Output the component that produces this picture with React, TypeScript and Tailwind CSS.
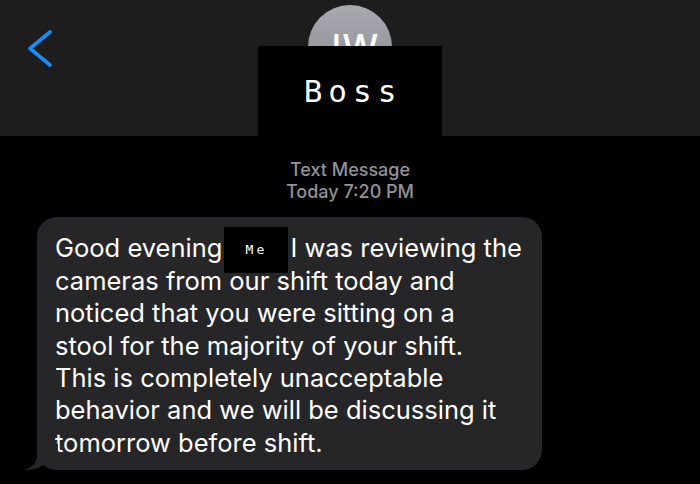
const lines = [
  null,
  "cameras from our shift today and",
  "noticed that you were sitting on a",
  "stool for the majority of your shift.",
  "This is completely unacceptable",
  "behavior and we will be discussing it",
  "tomorrow before shift.",
];

function Redacted({ label }: { label: string }) {
  return (
    <span className="inline-flex items-center justify-center w-[64px] h-[46px] -my-[8px] mx-[2px] align-middle bg-black text-[13px] text-white font-['DejaVu_Sans_Mono',monospace] tracking-[3px]">
      {label}
    </span>
  );
}

export default function App() {
  return (
    <div className="w-[700px] h-[484px] overflow-hidden bg-black font-['Inter',sans-serif]">
      {/* nav bar */}
      <header className="relative h-[136px] bg-[#1d1d1e] flex justify-center">
        <button className="absolute left-[26px] top-[30px]">
          <svg width="26" height="37" viewBox="0 0 26 37" fill="none">
            <path
              d="M24 2 L4 18.5 L24 35"
              stroke="#1b8bf8"
              strokeWidth="3.6"
              strokeLinecap="round"
              strokeLinejoin="round"
            />
          </svg>
        </button>

        <div className="mt-[5px] w-[84px] h-[84px] rounded-full bg-gradient-to-b from-[#a7a8b0] to-[#8a8b93] flex items-center justify-center">
          <span className="text-[36px] font-medium text-white tracking-[1px]">
            JW
          </span>
        </div>

        {/* name label */}
        <div className="absolute left-[258px] top-[46px] w-[184px] h-[90px] bg-black flex items-center justify-center">
          <span className="text-[31px] text-white font-['DejaVu_Sans_Mono',monospace] tracking-[6px] pl-[6px]">
            Boss
          </span>
        </div>
      </header>

      <div className="mt-[23px] text-center text-[18px] leading-[21.5px] font-medium text-[#929297]">
        <div>Text Message</div>
        <div>Today 7:20 PM</div>
      </div>

      {/* incoming bubble */}
      <div className="relative mt-[15px] ml-[37px] w-[505px] rounded-[20px] bg-[#262628] pl-[18px] pt-[15px] pb-[11px] text-[25.5px] leading-[32.3px] text-white">
        {lines.map((line, i) =>
          i === 0 ? (
            <div key={i}>
              Good evening
              <Redacted label="Me" />I was reviewing the
            </div>
          ) : (
            <div key={i}>{line}</div>
          )
        )}
        <svg
          className="absolute left-[-13px] bottom-0"
          width="34"
          height="26"
          viewBox="0 0 34 26"
          fill="#262628"
        >
          <path d="M13 0 L13 10 C13 18 9 23 1 26 C9 26 16 24 21 20 C25 24 30 26 34 26 L34 0 Z" />
        </svg>
      </div>
    </div>
  );
}
